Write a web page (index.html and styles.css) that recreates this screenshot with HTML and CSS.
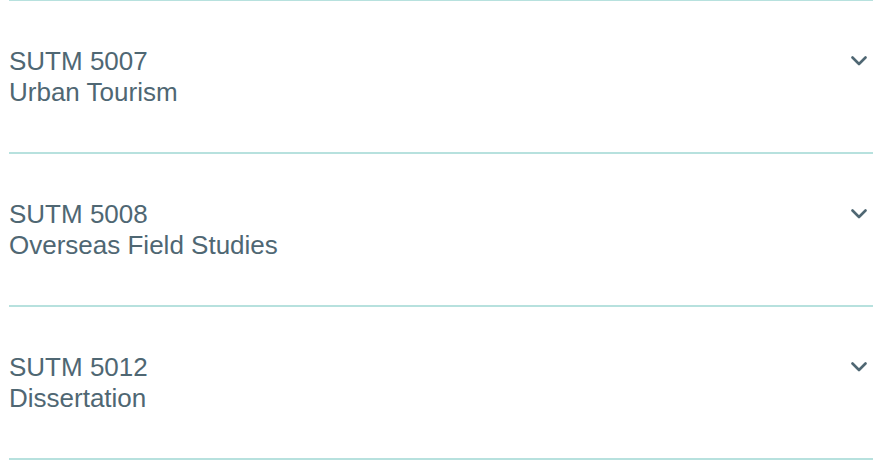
FILE: index.html
```html
<!DOCTYPE html>
<html>
<head>
<meta charset="utf-8">
<link rel="stylesheet" href="styles.css">
</head>
<body>
<ul class="course-list">
  <li class="course">
    <div class="course-text">
      <div class="course-code">SUTM 5007</div>
      <div class="course-name">Urban Tourism</div>
    </div>
    <svg class="chevron" width="16" height="10" viewBox="0 0 16 10"><path d="M1.5 1.5 L8 8 L14.5 1.5" fill="none" stroke="currentColor" stroke-width="2.6" stroke-linecap="round" stroke-linejoin="round"/></svg>
  </li>
  <li class="course">
    <div class="course-text">
      <div class="course-code">SUTM 5008</div>
      <div class="course-name">Overseas Field Studies</div>
    </div>
    <svg class="chevron" width="16" height="10" viewBox="0 0 16 10"><path d="M1.5 1.5 L8 8 L14.5 1.5" fill="none" stroke="currentColor" stroke-width="2.6" stroke-linecap="round" stroke-linejoin="round"/></svg>
  </li>
  <li class="course">
    <div class="course-text">
      <div class="course-code">SUTM 5012</div>
      <div class="course-name">Dissertation</div>
    </div>
    <svg class="chevron" width="16" height="10" viewBox="0 0 16 10"><path d="M1.5 1.5 L8 8 L14.5 1.5" fill="none" stroke="currentColor" stroke-width="2.6" stroke-linecap="round" stroke-linejoin="round"/></svg>
  </li>
</ul>
</body>
</html>
```
FILE: styles.css
```css
html, body {
  margin: 0;
  padding: 0;
  background: #ffffff;
}
.course-list {
  list-style: none;
  margin: -1px 13px 0 9px;
  padding: 0;
  border-top: 2px solid #b7e1de;
}
.course {
  display: flex;
  align-items: center;
  justify-content: space-between;
  height: 151px;
  border-bottom: 2px solid #b7e1de;
  color: #4f6773;
  font-family: "Liberation Sans", Arial, sans-serif;
  font-size: 26px;
  line-height: 31px;
}
.course-text {
  padding-left: 0;
}
.chevron {
  align-self: center;
  margin-top: -31px;
  margin-right: 6px;
  color: #4f6773;
}
```
